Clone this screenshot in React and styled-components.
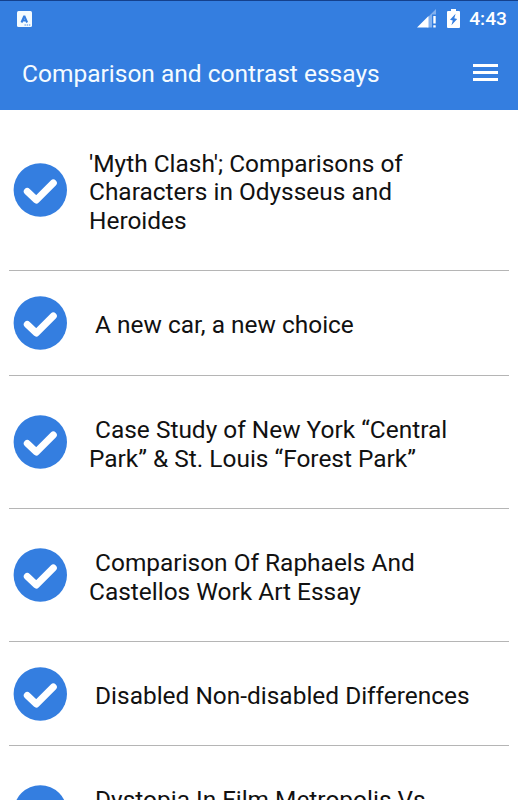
import styled, { createGlobalStyle } from "styled-components";

const essays = [
  { title: "'Myth Clash'; Comparisons of\nCharacters in Odysseus and\nHeroides", height: 161 },
  { title: " A new car, a new choice", height: 105 },
  { title: " Case Study of New York “Central\nPark” & St. Louis “Forest Park”", height: 133 },
  { title: " Comparison Of Raphaels And\nCastellos Work Art Essay", height: 133 },
  { title: " Disabled Non-disabled Differences", height: 104 },
  { title: " Dystopia In Film Metropolis Vs\n ", height: 133 },
];

function App() {
  return (
    <>
      <GlobalStyle />
      <Screen>
        <StatusBar>
          <KeyboardIcon />
          <StatusRight>
            <SignalIcon />
            <BatteryIcon />
            <Clock>4:43</Clock>
          </StatusRight>
        </StatusBar>
        <Toolbar>
          <Title>Comparison and contrast essays</Title>
          <MenuButton aria-label="menu">
            <span />
            <span />
            <span />
          </MenuButton>
        </Toolbar>
        <List>
          {essays.map((essay) => (
            <Row key={essay.title} $height={essay.height}>
              <CheckIcon />
              <RowText>{essay.title}</RowText>
            </Row>
          ))}
        </List>
      </Screen>
    </>
  );
}

const KeyboardIcon = () => (
  <svg width="15" height="16" viewBox="0 0 15 16">
    <rect width="15" height="16" rx="1.5" fill="#f4fbff" />
    <path d="M4.5 11.5 7.3 4.8l2.8 6.7M5.5 9.5h3.6" fill="none" stroke="#347ee0" strokeWidth="2" strokeLinejoin="bevel" />
    <path d="M7.5 14h6" stroke="#347ee0" strokeWidth="0.9" strokeDasharray="1.4 0.8" />
  </svg>
);

const SignalIcon = () => (
  <svg width="20" height="19" viewBox="0 0 20 19">
    <path d="M10 9 19 0v5.5h-4V18.5h-5z" fill="#84b1ee" />
    <path d="M0 18.5 11.5 7v11.5z" fill="#fff" />
    <path d="M16.3 7h2.4v7.5h-2.4zM16.3 16.2h2.4v2.3h-2.4z" fill="#fff" />
  </svg>
);

const BatteryIcon = () => (
  <svg width="13" height="19" viewBox="0 0 13 19">
    <path d="M4 0h5v2h3q1 0 1 1v15q0 1-1 1H1q-1 0-1-1V3q0-1 1-1h3z" fill="#fff" />
    <path d="M8.6 4.8 3 10.8l2.8.7L4.4 16.2 10.2 10l-2.9-.7z" fill="#347ee0" />
  </svg>
);

const CheckIcon = () => (
  <svg width="54" height="54" viewBox="0 0 54 54">
    <circle cx="27.3" cy="27" r="26.7" fill="#347ee0" />
    <path d="M14.3 28.5 23.3 37 40.3 20" fill="none" stroke="#fff" strokeWidth="7" strokeLinecap="round" strokeLinejoin="round" />
  </svg>
);

const GlobalStyle = createGlobalStyle`
  * {
    box-sizing: border-box;
  }
  body {
    margin: 0;
    font-family: Roboto, sans-serif;
    overflow: hidden;
  }
`;
const Screen = styled.div`
  height: 800px;
  overflow: hidden;
  background: #fff;
`;
const StatusBar = styled.header`
  height: 36px;
  padding: 0 11px 0 17px;
  display: flex;
  align-items: center;
  justify-content: space-between;
  background: #347ee0;
  border-top: 1px solid #14408c;
`;
const StatusRight = styled.div`
  display: flex;
  align-items: center;
  svg + svg {
    margin-left: 10px;
  }
`;
const Clock = styled.span`
  margin-left: 9px;
  color: #fff;
  font-size: 19.2px;
  font-weight: 500;
`;
const Toolbar = styled.div`
  height: 74px;
  padding: 0 20px 0 22px;
  display: flex;
  align-items: center;
  justify-content: space-between;
  background: #347ee0;
`;
const Title = styled.h1`
  margin: 0;
  color: #f4fbff;
  font-size: 24.5px;
  font-weight: 400;
`;
const MenuButton = styled.button`
  width: 25px;
  padding: 0;
  margin-bottom: 2px;
  border: none;
  background: none;
  display: grid;
  gap: 4px;
  span {
    height: 3px;
    background: #fff;
  }
`;
const List = styled.ul`
  margin: 0;
  padding: 0 9px;
  list-style: none;
`;
const Row = styled.li`
  height: ${(p) => p.$height}px;
  padding-left: 4px;
  display: flex;
  align-items: center;
  gap: 22px;
  border-bottom: 1px solid #b5b5b5;
  svg {
    flex: none;
  }
`;
const RowText = styled.span`
  padding-top: 5px;
  color: #111;
  font-size: 24.45px;
  line-height: 28.4px;
  white-space: pre;
`;

export default App;
